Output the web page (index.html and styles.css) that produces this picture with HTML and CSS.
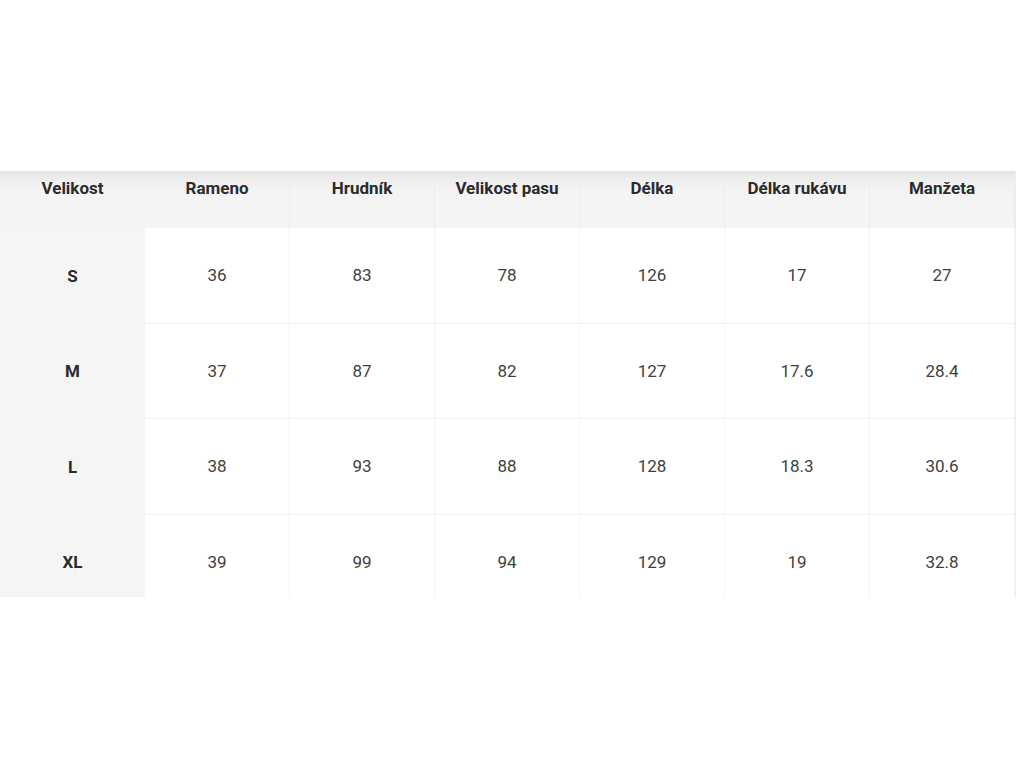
FILE: index.html
```html
<!DOCTYPE html>
<html lang="cs">
<head>
<meta charset="utf-8">
<title>Velikostní tabulka</title>
<link rel="stylesheet" href="styles.css">
</head>
<body>
<div class="page">
  <div class="table-wrap">
    <div class="size-table">
      <div class="cell head first">Velikost</div>
      <div class="cell head">Rameno</div>
      <div class="cell head">Hrudník</div>
      <div class="cell head">Velikost pasu</div>
      <div class="cell head">Délka</div>
      <div class="cell head">Délka rukávu</div>
      <div class="cell head">Manžeta</div>

      <div class="cell first">S</div>
      <div class="cell">36</div><div class="cell">83</div><div class="cell">78</div><div class="cell">126</div><div class="cell">17</div><div class="cell">27</div>

      <div class="cell first">M</div>
      <div class="cell">37</div><div class="cell">87</div><div class="cell">82</div><div class="cell">127</div><div class="cell">17.6</div><div class="cell">28.4</div>

      <div class="cell first">L</div>
      <div class="cell">38</div><div class="cell">93</div><div class="cell">88</div><div class="cell">128</div><div class="cell">18.3</div><div class="cell">30.6</div>

      <div class="cell first">XL</div>
      <div class="cell">39</div><div class="cell">99</div><div class="cell">94</div><div class="cell">129</div><div class="cell">19</div><div class="cell">32.8</div>
    </div>
  </div>
</div>
</body>
</html>
```
FILE: styles.css
```css
html, body {
  margin: 0;
  padding: 0;
  background: #ffffff;
}
body {
  font-family: Roboto, "Liberation Sans", sans-serif;
  color: #333333;
  width: 1024px;
  height: 768px;
  overflow: hidden;
}
.page {
  padding-top: 171px;
}
.table-wrap {
  width: 1016px;
  height: 426px;
  overflow: hidden;
  position: relative;
  border-right: 1px solid #ededed;
  box-sizing: border-box;
}
.size-table {
  display: grid;
  grid-template-columns: repeat(7, 145px);
  grid-template-rows: 57px repeat(4, 95.5px);
}
.cell {
  display: flex;
  align-items: center;
  justify-content: center;
  font-size: 17px;
  color: #404040;
  border-right: 1px solid #f4f4f4;
  border-bottom: 1px solid #f2f2f2;
  box-sizing: border-box;
  background: #ffffff;
}
.cell.head {
  align-items: flex-start;
  padding-top: 7px;
  font-weight: 700;
  color: #2b2b2b;
  background: linear-gradient(to bottom, #e4e4e4 0px, #eeeeee 8px, #f4f4f4 22px, #f5f5f5 100%);
  border-bottom: none;
  border-right: 1px solid #ececec;
}
.cell.first {
  background-color: #f5f5f5;
  font-weight: 700;
  color: #2b2b2b;
  border-right: none;
  border-bottom: none;
}
.cell.head.first {
  background: linear-gradient(to bottom, #e4e4e4 0px, #eeeeee 8px, #f4f4f4 22px, #f5f5f5 100%);
}
```
